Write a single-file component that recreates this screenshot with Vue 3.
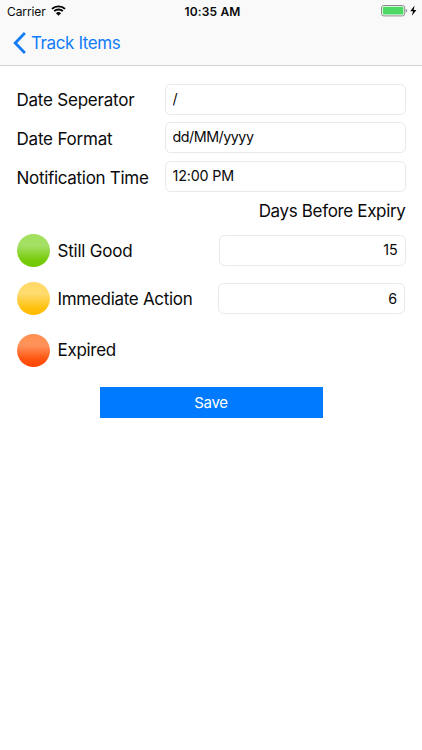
<template>
  <div class="screen">
    <header class="header">
      <div class="status-bar">
        <div class="carrier">
          <span>Carrier</span>
          <svg class="wifi" width="15" height="11" viewBox="0 0 14 11" preserveAspectRatio="none" aria-hidden="true">
            <path d="M0.9 3.9A8.7 8.7 0 0 1 13.1 3.9" />
            <path d="M3 6.1A5.7 5.7 0 0 1 11 6.1" />
            <path class="wifi-dot" d="M7 10.7L4.6 8.2A3.4 3.4 0 0 1 9.4 8.2Z" />
          </svg>
        </div>
        <span class="clock">10:35 AM</span>
        <div class="power">
          <svg width="37" height="12" viewBox="0 0 37 12" aria-hidden="true">
            <rect x="0.5" y="0.5" width="23.2" height="10.4" rx="2.2" fill="#fff" stroke="#8a8a8c" />
            <rect x="1.8" y="1.8" width="20.6" height="7.8" rx="0.9" fill="#4cd964" />
            <path d="M24.8 4Q26.2 4.4 26.2 5.7Q26.2 7 24.8 7.4Z" fill="#8a8a8c" />
            <path d="M33.6 0.6L29.2 6.3H32L30.9 10.8L35.4 4.9H32.6Z" fill="#000" />
          </svg>
        </div>
      </div>
      <nav class="nav-bar">
        <button class="back" type="button">
          <svg width="13" height="22" viewBox="0 0 13 22" aria-hidden="true">
            <path d="M11.9 1.1L2.2 11L11.9 20.9" />
          </svg>
          <span>Track Items</span>
        </button>
      </nav>
    </header>

    <form class="form" @submit.prevent>
      <div v-for="item in settings" :key="item.key" class="row" :class="item.key">
        <label :for="item.key">{{ item.label }}</label>
        <input :id="item.key" v-model="item.value" class="field" type="text" />
      </div>

      <h2 class="heading">Days Before Expiry</h2>

      <div v-for="item in levels" :key="item.key" class="level" :class="item.key">
        <span class="ball"></span>
        <label :for="item.key">{{ item.label }}</label>
        <input
          v-if="item.key !== 'expired'"
          :id="item.key"
          v-model="item.days"
          class="field days"
          type="text"
        />
      </div>

      <button class="save" type="submit">Save</button>
    </form>
  </div>
</template>

<script setup>
import { ref } from "vue";

const settings = ref([
  { key: "separator", label: "Date Seperator", value: "/" },
  { key: "format", label: "Date Format", value: "dd/MM/yyyy" },
  { key: "time", label: "Notification Time", value: "12:00 PM" },
]);

const levels = ref([
  { key: "good", label: "Still Good", days: "15" },
  { key: "action", label: "Immediate Action", days: "6" },
  { key: "expired", label: "Expired" },
]);
</script>

<style>
body {
  background: #fff;
}
</style>

<style scoped>
.screen {
  width: 422px;
  height: 750px;
  overflow: hidden;
  background: #fff;
  color: #0a0a0a;
  font-family: Inter, "Liberation Sans", sans-serif;
}
button,
input {
  font-family: inherit;
  color: inherit;
}
.header {
  box-sizing: border-box;
  height: 66px;
  background: #f9f9f9;
  border-bottom: 1px solid #d2d2d3;
}
.status-bar {
  display: grid;
  grid-template-columns: 1fr auto 1fr;
  align-items: center;
  height: 22px;
  padding: 0 4px 0 7px;
}
.carrier {
  display: flex;
  align-items: center;
  gap: 5px;
  font-size: 12px;
  letter-spacing: -0.1px;
}
.wifi {
  margin-bottom: 1px;
  fill: none;
  stroke: #000;
  stroke-width: 1.9;
}
.wifi .wifi-dot {
  fill: #000;
  stroke: none;
}
.clock {
  font-size: 12px;
  font-weight: 600;
  letter-spacing: 0.15px;
}
.power {
  display: flex;
  justify-content: flex-end;
}
.nav-bar {
  display: flex;
  align-items: center;
  height: 43px;
}
.back {
  display: flex;
  align-items: center;
  gap: 5px;
  padding: 0 0 1px 13px;
  border: 0;
  background: none;
  color: #117cf6;
  font-size: 17px;
  line-height: 22px;
  letter-spacing: -0.4px;
}
.back svg {
  fill: none;
  stroke: #117cf6;
  stroke-width: 2.8;
}
.form {
  padding: 17.5px 16.5px 0;
}
.row {
  display: flex;
  align-items: center;
  justify-content: space-between;
  height: 31px;
  margin-bottom: 7.7px;
}
.row label {
  padding-top: 2px;
}
label,
.heading {
  font-size: 17px;
  font-weight: 400;
  line-height: 22px;
  letter-spacing: -0.3px;
  white-space: nowrap;
}
.separator label {
  letter-spacing: -0.22px;
}
.format label {
  letter-spacing: -0.2px;
}
.row.time label {
  padding-top: 3px;
}
.field {
  box-sizing: border-box;
  width: 241px;
  height: 31px;
  padding: 0 7px 2px;
  border: 1px solid #e9e9e9;
  border-radius: 5.5px;
  background: #fff;
  outline: none;
  font-size: 14.3px;
  letter-spacing: -0.15px;
}
.format .field {
  letter-spacing: -0.48px;
}
.heading {
  margin: 0 0 12px;
  letter-spacing: -0.34px;
  text-align: right;
}
.level {
  display: flex;
  align-items: center;
  height: 34px;
  margin-bottom: 14px;
}
.level.action {
  margin-bottom: 18px;
}
.level.expired {
  margin-bottom: 19px;
}
.level label {
  margin-left: 8px;
}
.level.good label {
  padding-top: 1px;
  letter-spacing: -0.22px;
}
.level.expired label {
  padding-bottom: 1px;
}
.ball {
  width: 33px;
  height: 33px;
  border-radius: 50%;
}
.good .ball {
  background: linear-gradient(#a2e05b, #a4e065 35%, #78cc0c 78%, #70c800);
}
.action .ball {
  background: linear-gradient(#ffd965, #ffdb70 35%, #ffc20f 78%, #ffba00);
}
.expired .ball {
  background: linear-gradient(#ff9050, #ff935b 35%, #ff5511 75%, #ff4300);
}
.days {
  width: 187px;
  margin-left: auto;
  text-align: right;
}
.action .days {
  margin-right: 0.5px;
  padding-bottom: 1px;
}
.save {
  display: block;
  width: 223px;
  height: 31px;
  margin: 0 auto;
  padding: 0;
  border: 0;
  background: #007aff;
  color: #fff;
  font-size: 15px;
  letter-spacing: -0.3px;
}
</style>
